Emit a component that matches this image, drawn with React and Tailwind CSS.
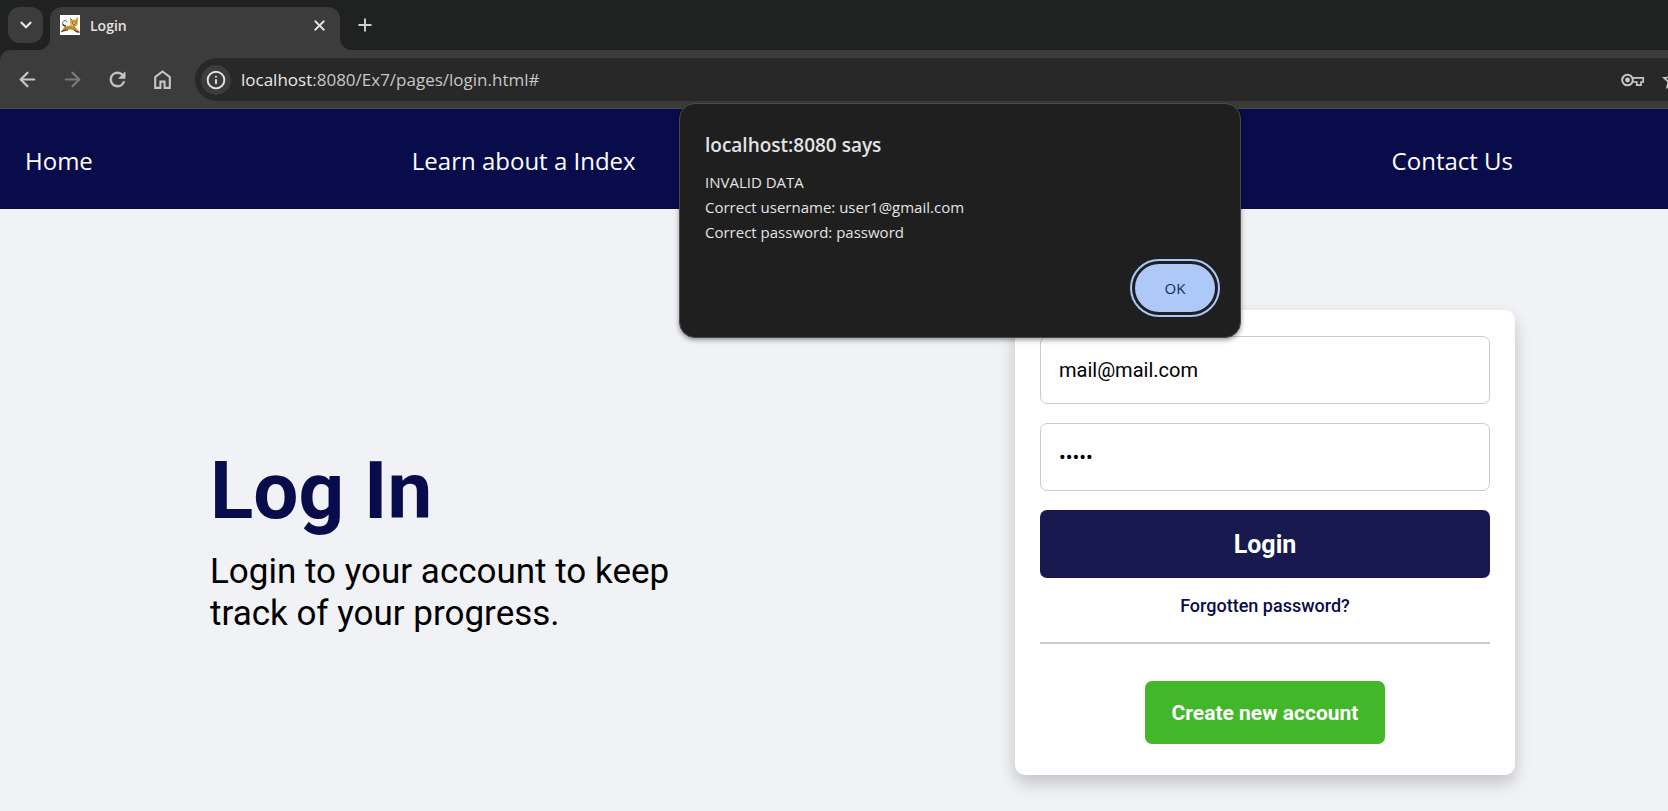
import React from "react";
import { ArrowLeft, ArrowRight, ChevronDown, Info, Plus, X } from "lucide-react";
import { MdStarBorder } from "react-icons/md";

const uiFont = "font-['Open_Sans','Noto_Sans',sans-serif]";

function HomeIcon() {
  return (
    <svg viewBox="0 0 24 24" className="size-[25px]" fill="currentColor" aria-hidden="true">
      <path d="M6 19h3v-6h6v6h3v-9l-6-4.5L6 10v9Zm-2 2V9l8-6 8 6v12h-7v-6h-2v6H4Z" />
    </svg>
  );
}

function ReloadIcon() {
  return (
    <svg viewBox="0 0 24 24" className="size-[23px]" fill="currentColor" stroke="currentColor" strokeWidth=".5" aria-hidden="true">
      <path d="M17.650 6.350A7.958 7.958 0 0 0 12 4a8 8 0 1 0 7.730 10h-2.080A6 6 0 1 1 12 6c1.660 0 3.140.69 4.220 1.780L13 11h7V4l-2.350 2.350z" />
    </svg>
  );
}

function KeyIcon() {
  return (
    <svg viewBox="0 0 24 14" className="h-[14px] w-6" fill="none" stroke="currentColor" aria-hidden="true">
      <circle cx="6.500" cy="7" r="5.300" strokeWidth="2" />
      <circle cx="6.500" cy="7" r="2.400" fill="currentColor" stroke="none" />
      <path d="M12 4.800h10.200v4.200h-2.200v3.200h-4.200v-3.200H12" strokeWidth="1.700" />
    </svg>
  );
}

function CatIcon() {
  return (
    <svg viewBox="0 0 20 20" className="size-5 shrink-0" aria-hidden="true">
      <rect width="20" height="20" fill="#fff" />
      <path d="M6 11C2 10 1.500 6.500 5 5.500c1.500 0 2 1 2 2" stroke="#555" strokeWidth=".9" fill="none" />
      <path d="M2.500 9.500l3.500 2" stroke="#222" strokeWidth="1.200" />
      <path d="M1 16.500l3.500-4.500 5-1.500 5 1 3.500 3.500 2 2.500h-3l-3.500-2.500-3.500-.5-3 .5-3 1.500z" fill="#c08a2c" />
      <path d="M1 17l4-2 3 .3M14 15l3 2h2.500" stroke="#33260f" strokeWidth=".9" fill="none" />
      <path d="M10 8V3l2.500 1.800h3L18 2.500V8c0 2.500-2 4-4 4s-4-1.500-4-4z" fill="#e0b04e" />
      <path d="M10 3l2 2M18 2.500l-2 2.300M12 5.500v1.500M14 5v1.500M16 5.500v1.500" stroke="#8a6423" strokeWidth=".8" />
      <path d="M12 8h1M15.500 8h1M13.300 10h1.700" stroke="#333" strokeWidth="1" />
    </svg>
  );
}

function TabStrip() {
  return (
    <div className="flex h-[50px] items-start bg-[#202221] pl-2 pt-[7px]">
      <button
        type="button"
        aria-label="Search tabs"
        className="flex h-9 w-[35px] items-center justify-center rounded-xl bg-[#3c3c3c] text-[#e3e3e3]"
      >
        <ChevronDown className="size-[18px]" strokeWidth={3} />
      </button>
      <div className="relative ml-[7px] flex h-[43px] w-[290px] rounded-t-xl bg-[#3c3c3c] pl-[10px] pr-3">
        <svg viewBox="0 0 12 12" className="absolute -left-3 bottom-0 size-3" aria-hidden="true">
          <path d="M12 0v12H0A12 12 0 0 0 12 0z" fill="#3c3c3c" />
        </svg>
        <svg viewBox="0 0 12 12" className="absolute -right-3 bottom-0 size-3" aria-hidden="true">
          <path d="M0 0v12h12A12 12 0 0 1 0 0z" fill="#3c3c3c" />
        </svg>
        <div className="flex h-9 w-full items-center">
          <CatIcon />
          <span className="ml-[10px] flex-1 text-[14px] font-semibold text-[#e3e3e3]">Login</span>
          <button type="button" aria-label="Close tab" className="text-[#e3e3e3]">
            <X className="size-[17px]" strokeWidth={2.6} />
          </button>
        </div>
      </div>
      <button type="button" aria-label="New tab" className="ml-[15px] flex h-9 items-center text-[#d0d0d0]">
        <Plus className="size-5" strokeWidth={2.3} />
      </button>
    </div>
  );
}

function Toolbar() {
  const tool = "flex w-[45px] items-center justify-center";
  return (
    <div className="bg-[#202221]">
      <div className="flex h-[59px] items-stretch overflow-hidden rounded-tl-[10px] border-b border-[#4a4a4a] bg-[#3c3c3c] pb-[7px] pl-[5px] pt-2 text-[#c7c7c7]">
        <button type="button" aria-label="Back" className={tool}>
          <ArrowLeft className="size-[23px]" strokeWidth={2.3} />
        </button>
        <button type="button" aria-label="Forward" className={`${tool} text-[#7a7a7a]`}>
          <ArrowRight className="size-[23px]" strokeWidth={2.3} />
        </button>
        <button type="button" aria-label="Reload" className={tool}>
          <ReloadIcon />
        </button>
        <button type="button" aria-label="Home page" className={tool}>
          <HomeIcon />
        </button>
        <div className="ml-[10px] flex min-w-0 flex-1 items-center rounded-l-full bg-[#282828] pl-[6px]">
          <button
            type="button"
            aria-label="Site information"
            className="flex size-[30px] shrink-0 items-center justify-center rounded-full bg-[#3c3c3c] text-[#e3e3e3]"
          >
            <Info className="size-5" strokeWidth={2.3} />
          </button>
          <p className="ml-[10px] flex-1 text-[17px] text-[#c7c7c7]">
            <span className="text-[#e8e8e8]">localhost</span>:8080/Ex7/pages/login.html#
          </p>
          <button type="button" aria-label="Saved passwords" className="shrink-0">
            <KeyIcon />
          </button>
          <button type="button" aria-label="Bookmark this page" className="-mr-4 ml-[15px] shrink-0">
            <MdStarBorder className="size-6" />
          </button>
        </div>
      </div>
    </div>
  );
}

function SiteNav() {
  return (
    <nav className="bg-[#090c4a]">
      <ul className="flex h-[100px] items-center justify-between pl-[25px] pr-[155px] pt-1 text-[24px] text-white">
        <li><a href="#home">Home</a></li>
        <li><a href="#index">Learn about a Index</a></li>
        <li className="w-[118px]" aria-hidden="true" />
        <li><a href="#contact">Contact Us</a></li>
      </ul>
    </nav>
  );
}

function LoginCard() {
  const field =
    "h-[68px] w-full rounded-[7px] border border-[#cccccc] bg-white px-[18px] text-[20px] text-black outline-none";
  return (
    <form
      onSubmit={(e) => e.preventDefault()}
      className="flex w-[500px] shrink-0 flex-col rounded-[10px] bg-white px-[25px] pb-[31px] pt-[26px] shadow-[0_10px_20px_rgba(0,0,0,0.1),0_6px_14px_rgba(0,0,0,0.1)]"
    >
      <div className="flex flex-col gap-[19px]">
        <input type="email" aria-label="Email" defaultValue="mail@mail.com" className={field} />
        <input type="password" aria-label="Password" defaultValue="abcde" className={field} />
        <button type="submit" className="h-[68px] rounded-[7px] bg-[#17194f] pt-0.5 text-[25px] font-bold text-white">
          Login
        </button>
      </div>
      <a href="#forgot" className="mt-4 text-center text-[18px] leading-6 font-medium text-[#090c4a]">
        Forgotten password?
      </a>
      <hr className="mt-6 border-t-2 border-[#cccccc]" />
      <button
        type="button"
        className="mt-[37px] h-[63px] self-center rounded-[7px] bg-[#42b72a] px-[27px] pt-0.5 text-[21px] font-bold text-white"
      >
        Create new account
      </button>
    </form>
  );
}

function AlertDialog() {
  return (
    <div
      role="alertdialog"
      aria-labelledby="alert-title"
      aria-describedby="alert-text"
      className={`absolute left-[679px] top-[103px] flex w-[562px] flex-col rounded-2xl border border-[#4a4a4a] bg-[#1f1f1f] px-[25px] pb-[25px] pt-[26px] text-[#e3e3e3] shadow-[0_2px_5px_rgba(0,0,0,0.4)] ${uiFont}`}
    >
      <h2 id="alert-title" className="text-[19px] leading-[30px] font-semibold">
        localhost:8080 says
      </h2>
      <p id="alert-text" className="mt-[10px] text-[15px] leading-[25px]">
        INVALID DATA
        <br />
        Correct username: user1@gmail.com
        <br />
        Correct password: password
      </p>
      <button
        type="button"
        className="mt-[19px] h-12 w-20 self-end rounded-full bg-[#aec9f8] text-[15px] font-medium text-[#0b2f6b] outline-2 outline-offset-[3px] outline-[#a8c7fa]"
      >
        OK
      </button>
    </div>
  );
}

export default function App() {
  return (
    <div className="relative flex min-h-screen flex-col overflow-x-hidden bg-[#f0f2f5]">
      <header className={uiFont}>
        <TabStrip />
        <Toolbar />
        <SiteNav />
      </header>
      <main className="flex flex-1 items-start justify-between pb-9 pl-[210px] pr-[153px] pt-[101px] font-['Roboto',sans-serif]">
        <section className="w-[500px] pt-[134px]">
          <h1 className="text-[80px] leading-[94px] font-bold text-[#090c4a]">Log In</h1>
          <p className="mt-[13px] text-[35px] leading-[42px] text-black">
            Login to your account to keep track of your progress.
          </p>
        </section>
        <LoginCard />
      </main>
      <AlertDialog />
    </div>
  );
}
